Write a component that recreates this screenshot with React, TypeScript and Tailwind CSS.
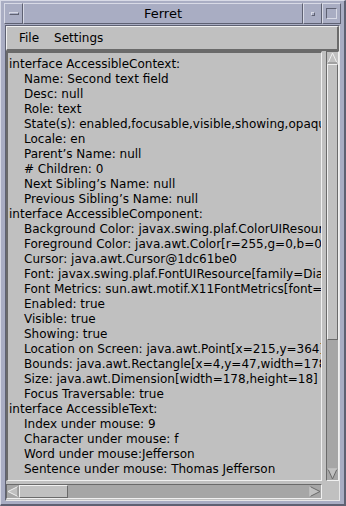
import React from 'react';

// Ferret accessibility inspector window (Motif look)

const lines: { text: string; indent: boolean }[] = [
  { text: 'interface AccessibleContext:', indent: false },
  { text: 'Name:  Second text field', indent: true },
  { text: 'Desc:  null', indent: true },
  { text: 'Role:  text', indent: true },
  { text: 'State(s): enabled,focusable,visible,showing,opaque,editable', indent: true },
  { text: 'Locale: en', indent: true },
  { text: 'Parent\u2019s Name: null', indent: true },
  { text: '# Children: 0', indent: true },
  { text: 'Next Sibling\u2019s Name: null', indent: true },
  { text: 'Previous Sibling\u2019s Name: null', indent: true },
  { text: 'interface AccessibleComponent:', indent: false },
  { text: 'Background Color: javax.swing.plaf.ColorUIResource[r=255,g=255,b=255]', indent: true },
  { text: 'Foreground Color: java.awt.Color[r=255,g=0,b=0]', indent: true },
  { text: 'Cursor: java.awt.Cursor@1dc61be0', indent: true },
  { text: 'Font: javax.swing.plaf.FontUIResource[family=Dialog,name=Dialog]', indent: true },
  { text: 'Font Metrics: sun.awt.motif.X11FontMetrics[font=java.awt.Font]', indent: true },
  { text: 'Enabled: true', indent: true },
  { text: 'Visible: true', indent: true },
  { text: 'Showing: true', indent: true },
  { text: 'Location on Screen: java.awt.Point[x=215,y=364]', indent: true },
  { text: 'Bounds: java.awt.Rectangle[x=4,y=47,width=178,height=18]', indent: true },
  { text: 'Size: java.awt.Dimension[width=178,height=18]', indent: true },
  { text: 'Focus Traversable: true', indent: true },
  { text: 'interface AccessibleText:', indent: false },
  { text: 'Index under mouse: 9', indent: true },
  { text: 'Character under mouse: f', indent: true },
  { text: 'Word under mouse:Jefferson', indent: true },
  { text: 'Sentence under mouse: Thomas Jefferson', indent: true },
];

const App: React.FC = () => {
  return (
    <div
      className="w-[346px] h-[506px] bg-[#a9adc3] flex flex-col border-t border-l border-[#d8dae6] border-r-2 border-b-2 border-r-[#5e6172] border-b-[#5e6172] overflow-hidden"
      style={{ fontFamily: '"DejaVu Sans", "Liberation Sans", sans-serif' }}
    >
      {/* タイトルバー */}
      <div className="flex h-[21px] mt-[2px] mx-[3px]">
        <div className="w-[19px] h-full flex items-center justify-center border border-t-[#d8dae6] border-l-[#d8dae6] border-r-[#5e6172] border-b-[#5e6172]">
          <div className="w-[10px] h-[3px] border border-t-[#d8dae6] border-l-[#d8dae6] border-r-[#5e6172] border-b-[#5e6172]" />
        </div>
        <div className="flex-1 h-full flex items-center justify-center text-[13px] pt-[1px] text-black border border-t-[#d8dae6] border-l-[#d8dae6] border-r-[#5e6172] border-b-[#5e6172]">
          Ferret
        </div>
        <div className="w-[19px] h-full flex items-center justify-center border border-t-[#d8dae6] border-l-[#d8dae6] border-r-[#5e6172] border-b-[#5e6172]">
          <div className="w-[4px] h-[4px] border border-t-[#d8dae6] border-l-[#d8dae6] border-r-[#5e6172] border-b-[#5e6172]" />
        </div>
        <div className="w-[19px] h-full flex items-center justify-center border border-t-[#d8dae6] border-l-[#d8dae6] border-r-[#5e6172] border-b-[#5e6172]">
          <div className="w-[11px] h-[11px] border border-t-[#5e6172] border-l-[#5e6172] border-r-[#d8dae6] border-b-[#d8dae6]" />
        </div>
      </div>

      {/* 本体 */}
      <div className="flex-1 mx-[4px] mb-[3px] mt-[1px] flex flex-col bg-[#c0c0c0] border border-t-[#5e6172] border-l-[#5e6172] border-r-[#e6e6e6] border-b-[#e6e6e6]">
        {/* メニューバー */}
        <div className="h-[25px] flex items-center gap-[15px] pl-[12px] text-[12px] text-black border-t border-l border-t-[#f0f0f0] border-l-[#f0f0f0] border-b-2 border-r-2 border-b-[#6a6a6a] border-r-[#6a6a6a]">
          <span>File</span>
          <span>Settings</span>
        </div>

        <div className="flex-1 flex flex-col">
          <div className="flex-1 flex">
            {/* テキスト領域 */}
            <div className="flex-1 overflow-hidden border-t-2 border-l-2 border-t-[#6a6a6a] border-l-[#6a6a6a] border-r border-b border-r-[#f0f0f0] border-b-[#f0f0f0] pt-[4px] pl-[1px] text-[12px] leading-[15px] text-black whitespace-nowrap mr-[4px]">
              {lines.map((l, i) => (
                <div key={i} className={l.indent ? 'pl-[15px]' : ''}>
                  {l.text}
                </div>
              ))}
            </div>
            {/* 縦スクロールバー */}
            <div className="w-[13px] flex flex-col bg-[#a6a6a6] border-t border-l border-t-[#6a6a6a] border-l-[#6a6a6a] border-r border-b border-r-[#f0f0f0] border-b-[#f0f0f0]">
              <svg width="11" height="12" viewBox="0 0 11 12" className="shrink-0">
                <rect width="11" height="12" fill="#c0c0c0" />
                <polygon points="5.5,1 10,11 1,11" fill="#c0c0c0" stroke="#f0f0f0" strokeWidth="1" />
                <line x1="10" y1="11" x2="1" y2="11" stroke="#6a6a6a" />
              </svg>
              <div className="h-[276px] bg-[#c0c0c0] border border-t-[#f0f0f0] border-l-[#f0f0f0] border-r-[#6a6a6a] border-b-[#6a6a6a]" />
              <div className="flex-1" />
              <svg width="11" height="12" viewBox="0 0 11 12" className="shrink-0">
                <polygon points="1,1 10,1 5.5,11" fill="#c0c0c0" stroke="#6a6a6a" strokeWidth="1" />
                <line x1="1" y1="1" x2="10" y2="1" stroke="#f0f0f0" />
              </svg>
            </div>
          </div>
          <div className="h-[15px] flex mt-[3px] mb-[1px]">
            {/* 横スクロールバー */}
            <div className="flex-1 flex bg-[#a6a6a6] border-t border-l border-t-[#6a6a6a] border-l-[#6a6a6a] border-r border-b border-r-[#f0f0f0] border-b-[#f0f0f0] mr-[4px]">
              <svg width="12" height="13" viewBox="0 0 12 13" className="shrink-0">
                <rect width="12" height="13" fill="#a6a6a6" />
                <polygon points="1,6.5 11,1.5 11,11.5" fill="#c0c0c0" stroke="#f0f0f0" strokeWidth="1" />
                <line x1="11" y1="1.5" x2="11" y2="11.5" stroke="#6a6a6a" />
              </svg>
              <div className="w-[49px] bg-[#c0c0c0] border border-t-[#f0f0f0] border-l-[#f0f0f0] border-r-[#6a6a6a] border-b-[#6a6a6a]" />
              <div className="flex-1" />
              <svg width="12" height="13" viewBox="0 0 12 13" className="shrink-0">
                <polygon points="1,1.5 11,6.5 1,11.5" fill="#c0c0c0" stroke="#6a6a6a" strokeWidth="1" />
                <line x1="1" y1="1.5" x2="1" y2="11.5" stroke="#f0f0f0" />
              </svg>
            </div>
            <div className="w-[13px] bg-[#c0c0c0]" />
          </div>
        </div>
      </div>
    </div>
  );
};

export default App;
